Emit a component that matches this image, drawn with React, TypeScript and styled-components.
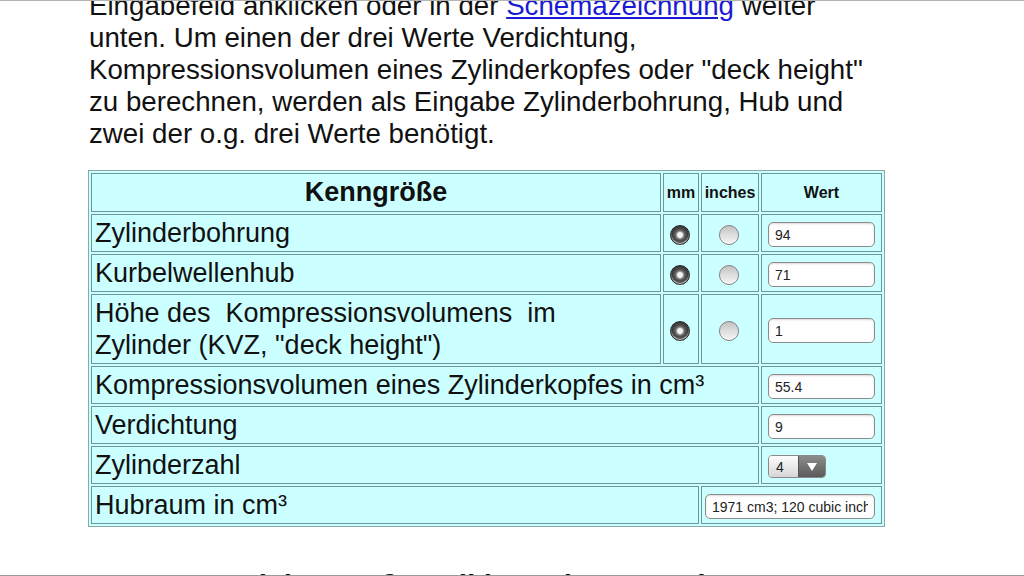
import styled, { createGlobalStyle } from "styled-components";

const GlobalStyle = createGlobalStyle`
  body {
    margin: 0;
    background: #fff;
    font-family: "Liberation Sans", Arial, sans-serif;
    color: #111;
  }
`;

const Page = styled.div`
  box-sizing: border-box;
  width: 1024px;
  height: 576px;
  overflow: hidden;
  border-top: 1px solid #b4b4b4;
  border-bottom: 1px solid #9a9a9a;
  background: #fff;
`;

const Column = styled.div`
  width: 795px;
  margin-left: 89px;
`;

const Intro = styled.p`
  margin: -11px 0 0;
  font-size: 27.7px;
  line-height: 32px;
`;

const Link = styled.a`
  color: #1a1ad6;
  text-decoration: underline;
`;

const Table = styled.table`
  margin: 20px 0 0 -1px;
  width: 796px;
  table-layout: fixed;
  border-collapse: separate;
  border-spacing: 2px;
  border: 1px solid #8aa8a8;
  background: #ccffff;
`;

const Col = styled.col<{ $w: number }>`
  width: ${p => p.$w}px;
`;

const HeadCell = styled.th<{ $size: number }>`
  border: 1px solid #6e9898;
  padding: 2px 1px;
  height: 33px;
  font-size: ${p => p.$size}px;
  font-weight: bold;
  text-align: center;
  white-space: nowrap;
`;

const Cell = styled.td<{ $align?: string; $padLeft?: number }>`
  border: 1px solid #6e9898;
  padding: 2px 5px 2px ${p => p.$padLeft ?? 3}px;
  font-size: 27px;
  line-height: 32px;
  text-align: ${p => p.$align || "left"};
  vertical-align: middle;
`;

const Radio = styled.input.attrs({ type: "radio" })`
  appearance: none;
  margin: 0;
  width: 20px;
  height: 20px;
  border-radius: 50%;
  vertical-align: middle;
  box-sizing: border-box;
  border: 1px solid #7d7d7d;
  background: linear-gradient(#c4c4c4, #f6f6f6);
  box-shadow: inset 0 -1px 1px rgba(255, 255, 255, 0.9);

  &:checked {
    border-color: #2c2c2c;
    background: radial-gradient(circle, #f2f2f2 0 2.5px, #9a9a9a 3.5px, #5a5a5a 5px, #3a3a3a 8px, #2a2a2a 10px);
  }
`;

const ValueInput = styled.input<{ $w: number }>`
  box-sizing: border-box;
  width: ${p => p.$w}px;
  height: 25px;
  margin: 0;
  border: 1px solid #8c8c8c;
  border-radius: 5px;
  padding: 0 6px;
  font: 14px "Liberation Sans", Arial, sans-serif;
  color: #222;
  background: #fff;
  box-shadow: inset 0 1px 2px rgba(0, 0, 0, 0.15);
  vertical-align: middle;
`;

const SelectWrap = styled.span`
  display: inline-flex;
  box-sizing: border-box;
  width: 58px;
  height: 23px;
  border: 1px solid #8a8a8a;
  border-radius: 4px;
  overflow: hidden;
  vertical-align: middle;
`;

const Select = styled.select`
  appearance: none;
  flex: 1;
  min-width: 0;
  margin: 0;
  border: 0;
  padding: 0 0 0 7px;
  font: 14px "Liberation Sans", Arial, sans-serif;
  color: #222;
  background: linear-gradient(#fdfdfd, #d6d6d6);
`;

const Arrow = styled.span`
  width: 26px;
  display: flex;
  align-items: center;
  justify-content: center;
  border-left: 1px solid #555;
  background: linear-gradient(#8c8c8c, #5a5a5a);
`;

const Heading = styled.h2`
  margin: 42px 0 0;
  font-size: 30px;
  line-height: 34px;
  text-align: center;
`;

type Row = { label: string; value: string };

const unitRows: Row[] = [
  { label: "Zylinderbohrung", value: "94" },
  { label: "Kurbelwellenhub", value: "71" },
];

function UnitCells({ name }: { name: string }) {
  return (
    <>
      <Cell $align="center"><Radio name={name} defaultChecked /></Cell>
      <Cell $align="center"><Radio name={name} /></Cell>
    </>
  );
}

export default function App() {
  return (
    <Page>
      <GlobalStyle />
      <Column>
        <Intro>
          Eingabefeld anklicken oder in der <Link href="#schema">Schemazeichnung</Link> weiter
          unten. Um einen der drei Werte Verdichtung, Kompressionsvolumen eines Zylinderkopfes
          oder "deck height" zu berechnen, werden als Eingabe Zylinderbohrung, Hub und zwei der
          o.g. drei Werte benötigt.
        </Intro>
        <Table>
          <colgroup>
            <Col $w={570} />
            <Col $w={36} />
            <Col $w={58} />
            <Col $w={121} />
          </colgroup>
          <tbody>
            <tr>
              <HeadCell $size={27}>Kenngröße</HeadCell>
              <HeadCell $size={16}>mm</HeadCell>
              <HeadCell $size={16}>inches</HeadCell>
              <HeadCell $size={16}>Wert</HeadCell>
            </tr>
            {unitRows.map(r => (
              <tr key={r.label}>
                <Cell>{r.label}</Cell>
                <UnitCells name={r.label} />
                <Cell $padLeft={6}><ValueInput $w={107} defaultValue={r.value} /></Cell>
              </tr>
            ))}
            <tr>
              <Cell>Höhe des&nbsp; Kompressionsvolumens&nbsp; im Zylinder (KVZ, "deck height")</Cell>
              <UnitCells name="kvz" />
              <Cell $padLeft={6}><ValueInput $w={107} defaultValue="1" /></Cell>
            </tr>
            <tr>
              <Cell colSpan={3}>Kompressionsvolumen eines Zylinderkopfes in cm³</Cell>
              <Cell $padLeft={6}><ValueInput $w={107} defaultValue="55.4" /></Cell>
            </tr>
            <tr>
              <Cell colSpan={3}>Verdichtung</Cell>
              <Cell $padLeft={6}><ValueInput $w={107} defaultValue="9" /></Cell>
            </tr>
            <tr>
              <Cell colSpan={3}>Zylinderzahl</Cell>
              <Cell $padLeft={6}>
                <SelectWrap>
                  <Select defaultValue="4">
                    {[1, 2, 3, 4, 5, 6, 8, 10, 12].map(n => (
                      <option key={n} value={n}>{n}</option>
                    ))}
                  </Select>
                  <Arrow>
                    <svg width="12" height="10" viewBox="0 0 12 10">
                      <path d="M1 1 H11 L6 9 Z" fill="#fff" />
                    </svg>
                  </Arrow>
                </SelectWrap>
              </Cell>
            </tr>
            <tr>
              <Cell colSpan={2}>Hubraum in cm³</Cell>
              <Cell colSpan={2} $padLeft={3}>
                <ValueInput $w={170} readOnly defaultValue="1971 cm3; 120 cubic inch" />
              </Cell>
            </tr>
          </tbody>
        </Table>
        <Heading>Welche Größe soll berechnet werden?</Heading>
      </Column>
    </Page>
  );
}
